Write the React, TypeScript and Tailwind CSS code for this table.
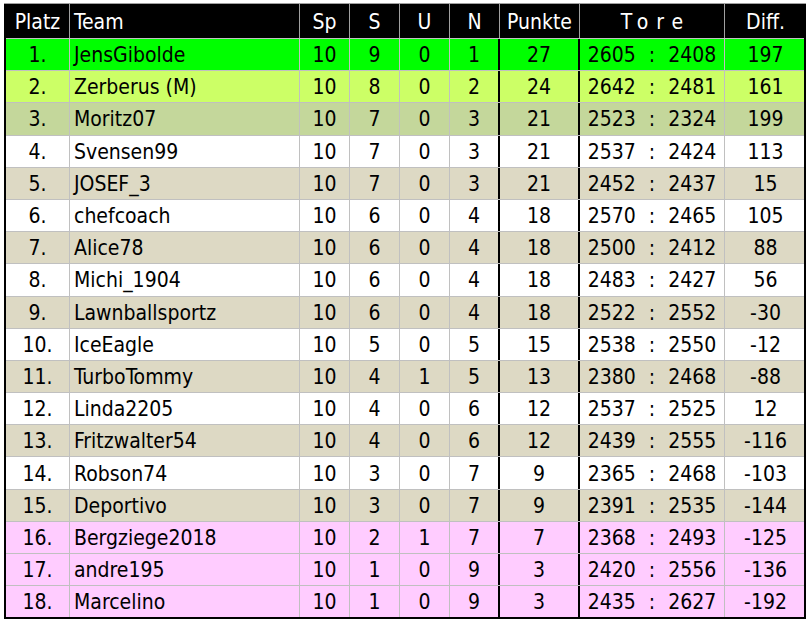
import React from 'react';

type Row = [number, string, number, number, number, number, number, number, number, number];

const rows: Row[] = [
  [1, 'JensGibolde', 10, 9, 0, 1, 27, 2605, 2408, 197],
  [2, 'Zerberus (M)', 10, 8, 0, 2, 24, 2642, 2481, 161],
  [3, 'Moritz07', 10, 7, 0, 3, 21, 2523, 2324, 199],
  [4, 'Svensen99', 10, 7, 0, 3, 21, 2537, 2424, 113],
  [5, 'JOSEF_3', 10, 7, 0, 3, 21, 2452, 2437, 15],
  [6, 'chefcoach', 10, 6, 0, 4, 18, 2570, 2465, 105],
  [7, 'Alice78', 10, 6, 0, 4, 18, 2500, 2412, 88],
  [8, 'Michi_1904', 10, 6, 0, 4, 18, 2483, 2427, 56],
  [9, 'Lawnballsportz', 10, 6, 0, 4, 18, 2522, 2552, -30],
  [10, 'IceEagle', 10, 5, 0, 5, 15, 2538, 2550, -12],
  [11, 'TurboTommy', 10, 4, 1, 5, 13, 2380, 2468, -88],
  [12, 'Linda2205', 10, 4, 0, 6, 12, 2537, 2525, 12],
  [13, 'Fritzwalter54', 10, 4, 0, 6, 12, 2439, 2555, -116],
  [14, 'Robson74', 10, 3, 0, 7, 9, 2365, 2468, -103],
  [15, 'Deportivo', 10, 3, 0, 7, 9, 2391, 2535, -144],
  [16, 'Bergziege2018', 10, 2, 1, 7, 7, 2368, 2493, -125],
  [17, 'andre195', 10, 1, 0, 9, 3, 2420, 2556, -136],
  [18, 'Marcelino', 10, 1, 0, 9, 3, 2435, 2627, -192],
];

// background per table position
const rowBg = (platz: number) => {
  if (platz === 1) return 'bg-[#00ff00]';
  if (platz === 2) return 'bg-[#ccff66]';
  if (platz === 3) return 'bg-[#c4d79b]';
  if (platz >= 16) return 'bg-[#ffccff]';
  return platz % 2 === 0 ? 'bg-white' : 'bg-[#ddd9c4]';
};

const cols = 'grid grid-cols-[64px_230px_50px_50px_50px_50px_80px_145px_81px]';
const c = 'flex items-center justify-center pt-[2px]';
const left = 'flex items-center pl-[4px] pt-[2px]';

const App: React.FC = () => {
  return (
    <div className="min-h-screen bg-white pt-[3px] pl-[4px]" style={{ fontFamily: "'DejaVu Sans Condensed', 'DejaVu Sans', sans-serif" }}>
      <div className="w-[802px] border-t border-[#a0a0a0]">
        <div className="border-x-2 border-b-2 border-black text-[21px] leading-none">
          {/* Header */}
          <div className={`${cols} h-[34px] bg-black text-white`}>
            <div className={`${c} border-r border-[#a0a0a0]`}>Platz</div>
            <div className={`${left} border-r border-[#a0a0a0]`}>Team</div>
            <div className={`${c} border-r border-[#a0a0a0]`}>Sp</div>
            <div className={`${c} border-r border-[#a0a0a0]`}>S</div>
            <div className={`${c} border-r border-[#a0a0a0]`}>U</div>
            <div className={`${c} border-r border-[#a0a0a0]`}>N</div>
            <div className={`${c} border-r border-[#a0a0a0]`}>Punkte</div>
            <div className={`${c} border-r border-[#a0a0a0] tracking-[8px] pl-[8px]`}>Tore</div>
            <div className={c}>Diff.</div>
          </div>

          {rows.map(([platz, team, sp, s, u, n, pkt, tf, tg, diff]) => (
            <div key={platz} className={`${cols} h-[32.2px] border-t border-[#c0c0c0] text-black ${rowBg(platz)}`}>
              <div className={`${c} border-r border-[#c0c0c0]`}>{platz}.</div>
              <div className={`${left} border-r border-[#c0c0c0]`}>{team}</div>
              <div className={`${c} border-r border-[#c0c0c0]`}>{sp}</div>
              <div className={`${c} border-r border-[#c0c0c0]`}>{s}</div>
              <div className={`${c} border-r border-[#c0c0c0]`}>{u}</div>
              <div className={`${c} border-r-2 border-black`}>{n}</div>
              <div className={`${c} border-r-2 border-black`}>{pkt}</div>
              <div className={`${c} gap-[13px] border-r border-[#c0c0c0]`}>
                <span>{tf}</span>
                <span>:</span>
                <span>{tg}</span>
              </div>
              <div className={c}>{diff}</div>
            </div>
          ))}
        </div>
      </div>
    </div>
  );
};

export default App;
